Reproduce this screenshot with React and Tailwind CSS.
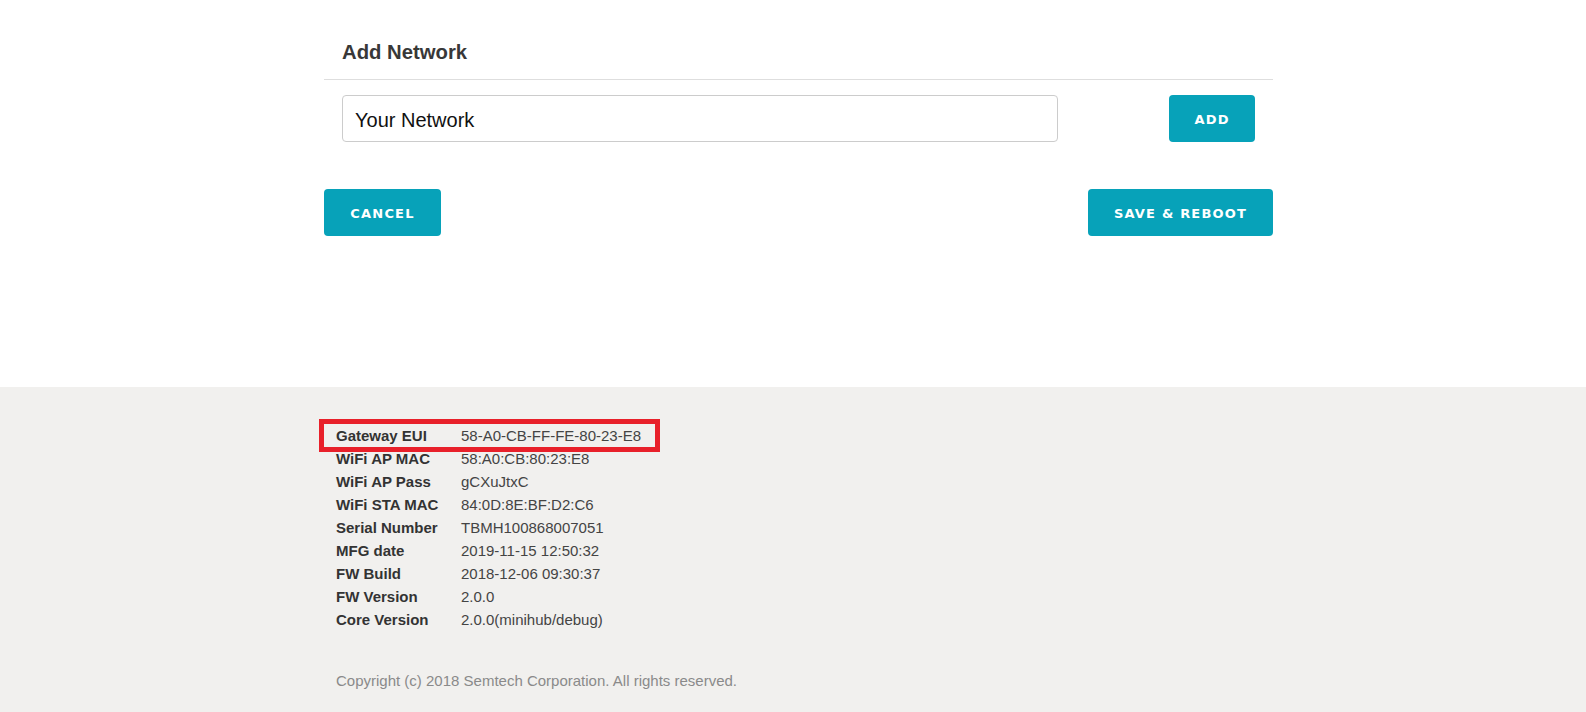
const deviceInfo = [
  ['Gateway EUI', '58-A0-CB-FF-FE-80-23-E8'],
  ['WiFi AP MAC', '58:A0:CB:80:23:E8'],
  ['WiFi AP Pass', 'gCXuJtxC'],
  ['WiFi STA MAC', '84:0D:8E:BF:D2:C6'],
  ['Serial Number', 'TBMH100868007051'],
  ['MFG date', '2019-11-15 12:50:32'],
  ['FW Build', '2018-12-06 09:30:37'],
  ['FW Version', '2.0.0'],
  ['Core Version', '2.0.0(minihub/debug)'],
]

function TealButton({ children, className = '' }) {
  return (
    <button
      type="button"
      className={`rounded-[4px] bg-[#07a2b9] pt-[2px] text-[13px] font-bold uppercase tracking-[1.2px] text-white font-['DejaVu_Sans',Verdana,sans-serif] ${className}`}
    >
      {children}
    </button>
  )
}

export default function App() {
  return (
    <div className="min-h-[712px] flex flex-col bg-white font-['Liberation_Sans',Arial,sans-serif]">
      <main className="h-[387px] shrink-0">
        <div className="ml-[324px] w-[949px]">
          <div className="border-b border-[#dedede] px-[18px] pt-[38px] pb-[13px]">
            <h2 className="text-[20.3px] font-bold leading-[28px] text-[#383838]">Add Network</h2>
          </div>

          <div className="flex items-center justify-between px-[18px] pt-[15px]">
            <input
              type="text"
              defaultValue="Your Network"
              className="h-[47px] w-[716px] rounded-[4px] border border-[#cccccc] px-[12px] pt-[4px] text-[20px] text-[#111] outline-none"
            />
            <TealButton className="h-[47px] w-[86px]">Add</TealButton>
          </div>

          <div className="mt-[47px] flex items-center justify-between">
            <TealButton className="h-[47px] w-[117px]">Cancel</TealButton>
            <TealButton className="h-[47px] w-[185px]">Save &amp; Reboot</TealButton>
          </div>
        </div>
      </main>

      <footer className="flex-1 bg-[#f1f0ee] pt-[37px] pb-[20px]">
        <div className="ml-[324px] w-[949px] pl-[12px] text-[15px] leading-[23px]">
          <dl>
            {deviceInfo.map(([label, value], i) => (
              <div key={label} className="relative flex">
                {i === 0 && (
                  <span className="pointer-events-none absolute left-[-17px] top-[-5px] h-[33px] w-[341px] border-[5px] border-[#e8202a]" />
                )}
                <dt className="w-[125px] font-bold text-[#333]">{label}</dt>
                <dd className="text-[#444]">{value}</dd>
              </div>
            ))}
          </dl>
          <p className="mt-[38px] text-[#8a8a8a]">Copyright (c) 2018 Semtech Corporation. All rights reserved.</p>
        </div>
      </footer>
    </div>
  )
}
